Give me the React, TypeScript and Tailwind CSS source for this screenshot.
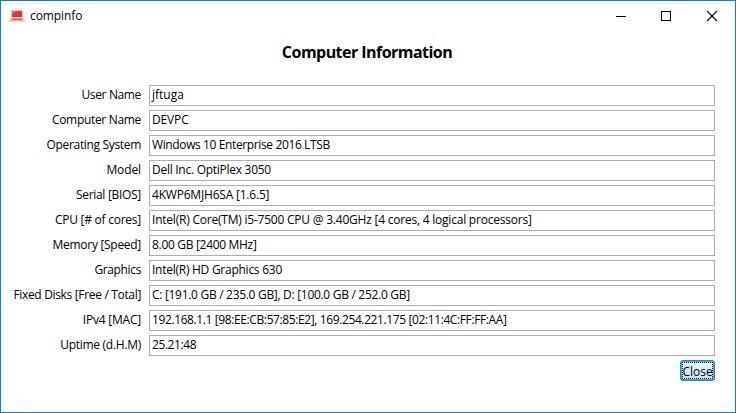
type Row = { label: string; value: string; labelClass: string; valueClass: string };

const rows: Row[] = [
  { label: 'User Name', value: 'jftuga', labelClass: 'tracking-[-0.36px]', valueClass: '' },
  { label: 'Computer Name', value: 'DEVPC', labelClass: 'tracking-[-0.32px]', valueClass: 'tracking-[-0.15px]' },
  { label: 'Operating System', value: 'Windows 10 Enterprise 2016 LTSB', labelClass: 'tracking-[-0.33px]', valueClass: 'tracking-[-0.38px]' },
  { label: 'Model', value: 'Dell Inc. OptiPlex 3050', labelClass: 'tracking-[-0.1px]', valueClass: 'tracking-[-0.27px]' },
  { label: 'Serial [BIOS]', value: '4KWP6MJH6SA [1.6.5]', labelClass: 'tracking-[-0.3px]', valueClass: 'tracking-[-0.2px]' },
  { label: 'CPU [# of cores]', value: 'Intel(R) Core(TM) i5-7500 CPU @ 3.40GHz [4 cores, 4 logical processors]', labelClass: 'tracking-[-0.25px]', valueClass: 'tracking-[-0.22px]' },
  { label: 'Memory [Speed]', value: '8.00 GB [2400 MHz]', labelClass: 'tracking-[-0.29px]', valueClass: 'tracking-[-0.31px]' },
  { label: 'Graphics', value: 'Intel(R) HD Graphics 630', labelClass: 'tracking-[-0.36px]', valueClass: 'tracking-[-0.26px]' },
  { label: 'Fixed Disks [Free / Total]', value: 'C: [191.0 GB / 235.0 GB], D: [100.0 GB / 252.0 GB]', labelClass: 'tracking-[-0.33px]', valueClass: 'tracking-[-0.3px]' },
  { label: 'IPv4 [MAC]', value: '192.168.1.1 [98:EE:CB:57:85:E2], 169.254.221.175 [02:11:4C:FF:FF:AA]', labelClass: 'tracking-[-0.22px]', valueClass: 'tracking-[-0.39px]' },
  { label: 'Uptime (d.H.M)', value: '25.21:48', labelClass: 'tracking-[-0.28px]', valueClass: 'tracking-[-0.42px]' },
];

function LaptopIcon() {
  return (
    <svg width="16" height="14" viewBox="0 0 16 14">
      <rect x="1.5" y="0.500" width="13" height="9" rx="1" fill="#f2cfcd" />
      <rect x="3" y="2" width="10" height="6" fill="#cf3f3a" />
      <path d="M3 2h5l-5 4z" fill="#dc655e" />
      <path d="M1.500 9h13l1.500 2.500v1.500H0v-1.500z" fill="#f3d0ce" />
      <path d="M3 9.500h10l.8 1.700H2.200z" fill="#d0605b" />
    </svg>
  );
}

export default function App() {
  return (
    <div className="flex h-[413px] w-[736px] flex-col border border-[#1979ca] bg-white font-['Open_Sans','Noto_Sans',sans-serif] text-[12px] leading-[16px] text-black">
      <header className="flex h-[30px] items-center pl-2">
        <LaptopIcon />
        <span className="ml-[5px] tracking-[-0.1px]">compinfo</span>
        <div className="ml-auto flex items-center">
          <svg width="128" height="12" viewBox="0 0 128 12" fill="none" stroke="#000" shapeRendering="crispEdges">
            <path d="M9 6.500h10" />
            <rect x="54.500" y="1.500" width="9" height="9" />
            <path d="M100 1l10 10M110 1l-10 10" shapeRendering="auto" strokeWidth="1.100" />
          </svg>
        </div>
      </header>
      <h1 className="mt-[10px] h-[22px] pr-[2px] text-center text-[16px] font-bold leading-[22px] tracking-[-0.54px]">Computer Information</h1>
      <main className="mt-[22px] flex flex-col gap-1 pr-[20px]">
        {rows.map((r) => (
          <div key={r.label} className="flex h-[21px]">
            <div className={`w-[148px] whitespace-nowrap pr-[8px] pt-[2px] text-right ${r.labelClass}`}>{r.label}</div>
            <div className={`flex-1 whitespace-nowrap border border-[#abadb3] pl-[2px] pt-[1px] ${r.valueClass}`}>{r.value}</div>
          </div>
        ))}
        <button className="flex h-[21px] w-[35px] self-end rounded-[3px] border border-[#3c7fb1] bg-[#10c0f0] p-[1px]">
          <span className="flex h-full w-full justify-center border border-dotted border-black bg-linear-to-b from-[#eaf6fd] to-[#bee6fd] pt-px">Close</span>
        </button>
      </main>
    </div>
  );
}
